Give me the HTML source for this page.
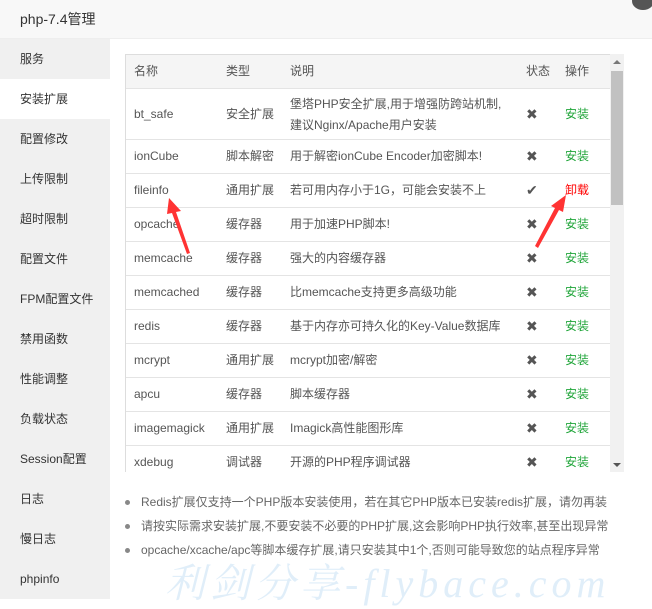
<!DOCTYPE html>
<html><head><meta charset="utf-8"><style>
*{margin:0;padding:0;box-sizing:border-box}
body{width:652px;height:599px;overflow:hidden;background:#fff;font-family:"Liberation Sans","Noto Sans CJK SC",sans-serif;font-size:12px;color:#555;position:relative}
.title{position:absolute;left:0;top:0;width:652px;height:39px;background:#f8f8f8;border-bottom:1px solid #eee;font-size:14px;color:#333;line-height:38px;padding-left:20px}
.side{position:absolute;left:0;top:39px;width:110px;height:560px;background:#f0f0f0}
.side div{height:40px;line-height:40px;padding-left:20px;color:#333;font-size:12px}
.side .act{background:#fff}
.tbl{position:absolute;left:125px;top:54px;width:486px;border:1px solid #ddd;border-bottom:none;height:418px;overflow:hidden}
.row{position:relative;border-bottom:1px solid #e4e4e4;height:34px}
.row span{position:absolute;top:0;line-height:33px;white-space:nowrap}
.hd{background:#f5f5f5;height:34px}
.c1{left:8px}.c2{left:100px}.c3{left:164px}.c4{left:400px;font-size:14px;color:#555}.c5{left:439px;color:#20a53a}
.red{color:#f00!important}
.sb{position:absolute;left:610px;top:54px;width:14px;height:418px;background:#f1f1f1}
.thumb{position:absolute;left:611px;top:71px;width:12px;height:134px;background:#c1c1c1}
ul{position:absolute;left:141px;top:492px;list-style:none;color:#666}
li{height:24px;line-height:20px;position:relative;white-space:nowrap}
li:before{content:"";position:absolute;left:-16px;top:8px;width:5px;height:5px;border-radius:50%;background:#888}
.wm{position:absolute;left:165px;top:552px;font-size:40px;color:#e0eef9;font-family:"Liberation Serif","Noto Serif CJK SC",serif;font-style:italic;letter-spacing:5px;white-space:nowrap}
</style></head><body>
<div class="title">php-7.4管理</div>
<div style="position:absolute;left:632px;top:-8px;width:22px;height:18px;border-radius:50%;background:#555"></div>
<div class="side">
<div>服务</div><div class="act">安装扩展</div><div>配置修改</div><div>上传限制</div><div>超时限制</div><div>配置文件</div><div>FPM配置文件</div><div>禁用函数</div><div>性能调整</div><div>负载状态</div><div>Session配置</div><div>日志</div><div>慢日志</div><div>phpinfo</div>
</div>
<div class="tbl">
<div class="row hd"><span class="c1">名称</span><span class="c2">类型</span><span class="c3">说明</span><span class="c4" style="font-size:12px">状态</span><span class="c5" style="color:#555">操作</span></div>
<div class="row" style="height:51px"><span class="c1" style="line-height:50px">bt_safe</span><span class="c2" style="line-height:50px">安全扩展</span><span class="c3" style="line-height:21px;top:5px">堡塔PHP安全扩展,用于增强防跨站机制,<br>建议Nginx/Apache用户安装</span><span class="c4" style="line-height:50px">✖</span><span class="c5" style="line-height:50px">安装</span></div>
<div class="row"><span class="c1">ionCube</span><span class="c2">脚本解密</span><span class="c3">用于解密ionCube Encoder加密脚本!</span><span class="c4">✖</span><span class="c5">安装</span></div>
<div class="row"><span class="c1">fileinfo</span><span class="c2">通用扩展</span><span class="c3">若可用内存小于1G，可能会安装不上</span><span class="c4">✔</span><span class="c5 red">卸载</span></div>
<div class="row"><span class="c1">opcache</span><span class="c2">缓存器</span><span class="c3">用于加速PHP脚本!</span><span class="c4">✖</span><span class="c5">安装</span></div>
<div class="row"><span class="c1">memcache</span><span class="c2">缓存器</span><span class="c3">强大的内容缓存器</span><span class="c4">✖</span><span class="c5">安装</span></div>
<div class="row"><span class="c1">memcached</span><span class="c2">缓存器</span><span class="c3">比memcache支持更多高级功能</span><span class="c4">✖</span><span class="c5">安装</span></div>
<div class="row"><span class="c1">redis</span><span class="c2">缓存器</span><span class="c3">基于内存亦可持久化的Key-Value数据库</span><span class="c4">✖</span><span class="c5">安装</span></div>
<div class="row"><span class="c1">mcrypt</span><span class="c2">通用扩展</span><span class="c3">mcrypt加密/解密</span><span class="c4">✖</span><span class="c5">安装</span></div>
<div class="row"><span class="c1">apcu</span><span class="c2">缓存器</span><span class="c3">脚本缓存器</span><span class="c4">✖</span><span class="c5">安装</span></div>
<div class="row"><span class="c1">imagemagick</span><span class="c2">通用扩展</span><span class="c3">Imagick高性能图形库</span><span class="c4">✖</span><span class="c5">安装</span></div>
<div class="row"><span class="c1">xdebug</span><span class="c2">调试器</span><span class="c3">开源的PHP程序调试器</span><span class="c4">✖</span><span class="c5">安装</span></div>
</div>
<div class="sb"></div><div class="thumb"></div>
<div style="position:absolute;left:613px;top:60px;border:4px solid transparent;border-bottom:4px solid #777;border-top:none"></div>
<div style="position:absolute;left:613px;top:463px;border:4px solid transparent;border-top:4px solid #555;border-bottom:none"></div>
<ul>
<li>Redis扩展仅支持一个PHP版本安装使用，若在其它PHP版本已安装redis扩展，请勿再装</li>
<li>请按实际需求安装扩展,不要安装不必要的PHP扩展,这会影响PHP执行效率,甚至出现异常</li>
<li>opcache/xcache/apc等脚本缓存扩展,请只安装其中1个,否则可能导致您的站点程序异常</li>
</ul>
<div class="wm">利剑分享-flybace.com</div>
<svg style="position:absolute;left:0;top:0" width="652" height="599">
<polygon points="169,198 181,211 176,212 190,253 187,254 172,213 167,214" fill="#f33"/>
<polygon points="566,195 563,212 559,210 538,248 535,246 555,208 551,206" fill="#f33"/>
</svg>
</body></html>
